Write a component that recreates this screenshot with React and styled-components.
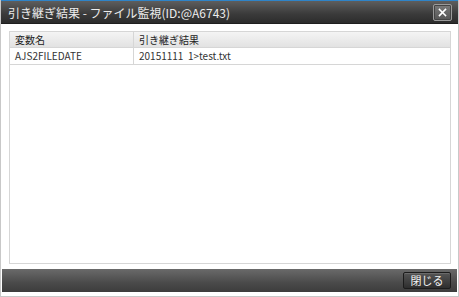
import React from "react";
import styled, { createGlobalStyle } from "styled-components";

const Global = createGlobalStyle`
  html, body { margin: 0; padding: 0; background: #fff; }
  body { font-family: "Noto Sans CJK JP", "Liberation Sans", sans-serif; }
`;

const Window = styled.div`
  width: 459px;
  height: 297px;
  box-sizing: border-box;
  display: flex;
  flex-direction: column;
  background: #fff;
  border: 1px solid #c8c8c8;
  border-top: none;
`;

const TitleBar = styled.div`
  height: 24px;
  box-sizing: border-box;
  display: flex;
  align-items: center;
  justify-content: space-between;
  padding: 0 6px 0 7px;
  background: linear-gradient(#5e5e5e, #3a3a3a 60%, #2c2c2c);
  border-top: 1px solid #2f84c8;
  border-bottom: 1px solid #1e1e1e;
`;

const Title = styled.div`
  color: #ececec;
  font-size: 12px;
  font-family: "Noto Sans CJK JP", "Liberation Sans", sans-serif;
`;

const IconButton = styled.button`
  width: 19px;
  height: 17px;
  padding: 0;
  display: flex;
  align-items: center;
  justify-content: center;
  background: linear-gradient(#7a7a7a, #555);
  border: 1px solid #9a9a9a;
  border-radius: 2px;
  box-shadow: inset 0 0 0 1px #444;
`;

const Body = styled.div`
  flex: 1;
  padding: 7px 7px 5px 8px;
  display: flex;
`;

const Grid = styled.div`
  flex: 1;
  border: 1px solid #d6d6d6;
  display: flex;
  flex-direction: column;
`;

const Row = styled.div`
  display: grid;
  grid-template-columns: 124px 1fr;
  height: ${(p) => (p.$header ? 15 : 16)}px;
  background: ${(p) => (p.$header ? "linear-gradient(#f4f4f4, #e2e2e2)" : "#fff")};
  border-bottom: 1px solid #d6d6d6;
`;

const Cell = styled.div`
  font-size: 10px;
  line-height: ${(p) => (p.$header ? 15 : 16)}px;
  color: ${(p) => (p.$header ? "#222" : "#333")};
  padding-left: 5px;
  white-space: pre;
  border-right: ${(p) => (p.$last ? "none" : "1px solid #d6d6d6")};
  font-family: "Noto Sans CJK JP", "Liberation Sans", sans-serif;
`;

const Footer = styled.div`
  height: 23px;
  margin: 0 1px 4px 1px;
  box-sizing: border-box;
  display: flex;
  align-items: center;
  justify-content: flex-end;
  padding-right: 6px;
  background: linear-gradient(#6a6a6a, #4a4a4a 60%, #3c3c3c);
`;

const TextButton = styled.button`
  width: 48px;
  height: 17px;
  padding: 0;
  font-size: 11px;
  color: #f4f4f4;
  font-family: "Noto Sans CJK JP", "Liberation Sans", sans-serif;
  background: linear-gradient(#555, #2e2e2e);
  border: 1px solid #1c1c1c;
  border-radius: 2px;
  box-shadow: inset 0 1px 0 #6a6a6a;
  line-height: 15px;
`;

export default function App() {
  return (
    <>
      <Global />
      <Window>
        <TitleBar>
          <Title>引き継ぎ結果 - ファイル監視(ID:@A6743)</Title>
          <IconButton>
            <svg width="11" height="11" viewBox="0 0 11 11">
              <path d="M2.5 2.5 L8.5 8.5 M8.5 2.5 L2.5 8.5" stroke="#fff" strokeWidth="1.6" strokeLinecap="square" />
            </svg>
          </IconButton>
        </TitleBar>
        <Body>
          <Grid>
            <Row $header>
              <Cell $header>変数名</Cell>
              <Cell $header $last>引き継ぎ結果</Cell>
            </Row>
            <Row>
              <Cell>AJS2FILEDATE</Cell>
              <Cell $last>{"20151111  1>test.txt"}</Cell>
            </Row>
          </Grid>
        </Body>
        <Footer>
          <TextButton>閉じる</TextButton>
        </Footer>
      </Window>
    </>
  );
}
